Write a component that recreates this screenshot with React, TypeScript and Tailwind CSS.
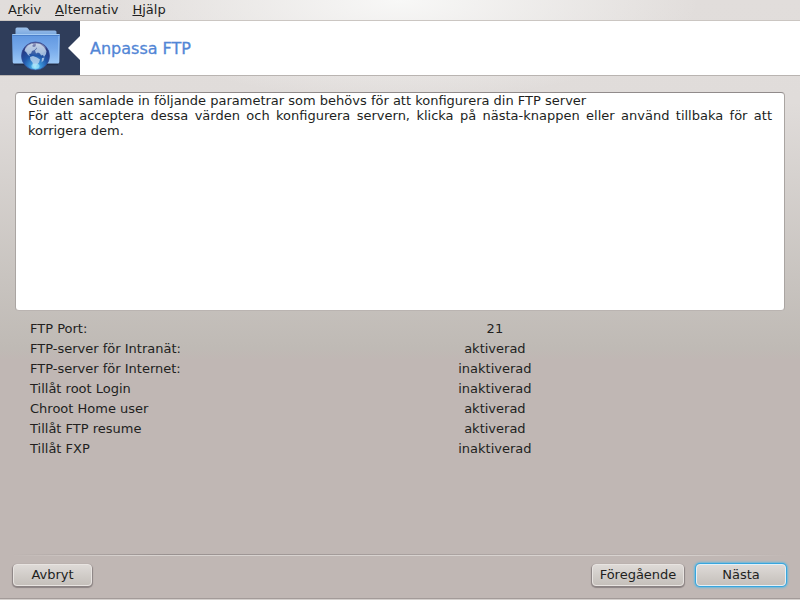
import type { ReactNode } from "react";

interface Setting {
  label: string;
  value: string;
}

const settings: Setting[] = [
  { label: "FTP Port:", value: "21" },
  { label: "FTP-server för Intranät:", value: "aktiverad" },
  { label: "FTP-server för Internet:", value: "inaktiverad" },
  { label: "Tillåt root Login", value: "inaktiverad" },
  { label: "Chroot Home user", value: "aktiverad" },
  { label: "Tillåt FTP resume", value: "aktiverad" },
  { label: "Tillåt FXP", value: "inaktiverad" },
];

const FolderGlobeIcon = () => (
  <svg viewBox="0 0 80 54" className="h-[54px] w-20 shrink-0" aria-hidden="true">
    <defs>
      <linearGradient id="folderBack" x1="0" y1="0" x2="0" y2="1">
        <stop offset="0" stopColor="#9dc0ea" />
        <stop offset="1" stopColor="#79a8e0" />
      </linearGradient>
      <linearGradient id="folderFront" x1="0" y1="0" x2="0" y2="1">
        <stop offset="0" stopColor="#5f96e0" />
        <stop offset="0.5" stopColor="#76a9ea" />
        <stop offset="1" stopColor="#9cc8f6" />
      </linearGradient>
      <radialGradient id="globe" cx="0.5" cy="0.92" r="0.9">
        <stop offset="0" stopColor="#7fdcfa" />
        <stop offset="0.22" stopColor="#3a94da" />
        <stop offset="0.5" stopColor="#2156a8" />
        <stop offset="0.85" stopColor="#26367f" />
        <stop offset="1" stopColor="#5a6199" />
      </radialGradient>
      <linearGradient id="gloss" x1="0" y1="0" x2="0" y2="1">
        <stop offset="0" stopColor="#ffffff" stopOpacity="0.4" />
        <stop offset="1" stopColor="#ffffff" stopOpacity="0.05" />
      </linearGradient>
    </defs>
    <rect width="80" height="54" fill="#2f3d5a" />
    <path d="M80 15 68 27l12 12z" fill="#fff" />
    <path d="M15.500 14V8q0-1.500 1.500-1.500h9q1.500 0 2.300 1.200l1.200 1.800H55q1.500 0 1.500 1.500v3z" fill="url(#folderBack)" />
    <path d="M14 43.500h44" stroke="#18223a" strokeWidth="1.500" opacity="0.6" />
    <path d="M12 14q0-1 1-1h46q1 0 1 1l-.7 27q0 1.500-1.500 1.500H14.200q-1.500 0-1.500-1.500z" fill="url(#folderFront)" />
    <path d="M12.500 13.500h47" stroke="#a5cbf3" />
    <path d="M12.500 14.500h47" stroke="#4b80cb" />
    <path d="M58.800 15 58.300 41" stroke="#a9cff6" opacity="0.6" />
    <circle cx="35.500" cy="35" r="14" fill="url(#globe)" stroke="#344a92" strokeWidth="0.700" />
    <g fill="#bcd5ee" opacity="0.8">
      <path d="M25 28l3-3.500 4-2 1.500 1-1.500 1.500 2 1 1.500-1 1 2-2 2-2.500 1-1 2.500-2 .5 1 2-2-1-2-3-1.500-1z" />
      <path d="M36 22.500l4 .5 4 3 2.500 4-.5 3-2 3-1-2-2 .5-1-2-2-1-2 1-1-3 2-2-1.500-2z" />
      <path d="M30 36l3-1 4 1.500 3 2-1 3-2.500 3-1.500 3-2-3-.5-3-2-2.500z" />
      <path d="M42 37l2.500-.5-1 3-2 2z" />
    </g>
    <ellipse cx="35.500" cy="28" rx="10.500" ry="6" fill="url(#gloss)" />
    <ellipse cx="35.500" cy="45" rx="4" ry="2.500" fill="#a5ecff" opacity="0.6" />
  </svg>
);

const MenuItem: React.FC<{ children: ReactNode }> = ({ children }) => (
  <button type="button" className="leading-5">
    {children}
  </button>
);

const WizardButton: React.FC<{ label: string; className: string }> = ({ label, className }) => (
  <button
    type="button"
    className={`h-[22px] rounded-[4px] border bg-gradient-to-b from-[#dedad7] to-[#c5c0bb] leading-5 ${className}`}
  >
    {label}
  </button>
);

const plain = "border-[#e8e4e1] shadow-[0_1px_1px_1px_#8b8383]";
const focused = "border-[#e4f0f6] shadow-[0_0_0_1px_#38a6de,0_0_2px_2px_#6ab9dd]";

export default function App() {
  return (
    <div className="flex min-h-screen flex-col bg-[radial-gradient(ellipse_300px_100px_at_top,#f8f8f7,transparent),linear-gradient(#e1dddb,#e0dcda_17%,#bfbab5_58%,#c0b7b4_60%)] font-['DejaVu_Sans','Liberation_Sans',sans-serif] text-[13px] text-[#221f1e]">
      <nav className="flex h-[21px] items-start gap-[14px] border-b border-[#cbc6c2] pl-2">
        <MenuItem>A<u>r</u>kiv</MenuItem>
        <MenuItem><u>A</u>lternativ</MenuItem>
        <MenuItem><u>H</u>jälp</MenuItem>
      </nav>

      <header className="flex items-center border-b border-[#b9b4b1] bg-white">
        <FolderGlobeIcon />
        <h1 className="pt-px pl-[10px] text-[16px] leading-6 text-[#5286d6] [-webkit-text-stroke:0.3px_#5286d6]">Anpassa FTP</h1>
      </header>

      <main className="flex grow flex-col px-[15px] pt-4">
        <div className="h-[219px] rounded-[4px] border border-t-[#918b8b] border-r-[#aaa5a2] border-b-[#bab4b1] border-l-[#aaa5a2] bg-white px-3 text-justify leading-[15px]">
          <p>Guiden samlade in följande parametrar som behövs för att konfigurera din FTP server</p>
          <p>
            För att acceptera dessa värden och konfigurera servern, klicka på nästa-knappen eller använd tillbaka för att
            korrigera dem.
          </p>
        </div>

        <table className="mt-2 ml-[15px] w-[69%] table-fixed leading-5">
          <tbody>
            {settings.map((s) => (
              <tr key={s.label}>
                <th scope="row" className="w-3/4 p-0 text-left font-normal">{s.label}</th>
                <td className="p-0 text-center">{s.value}</td>
              </tr>
            ))}
          </tbody>
        </table>
      </main>

      <footer>
        <div className="mx-3">
          <div className="h-px bg-gradient-to-r from-transparent via-[#999190] via-20% to-transparent" />
          <div className="h-px bg-[linear-gradient(to_right,transparent,#d8d3d0_15%,#d8d3d0_85%,transparent)]" />
        </div>
        <div className="flex border-b border-[#a39b99] pt-2 pr-[14px] pb-3 pl-[13px]">
          <WizardButton label="Avbryt" className={`w-[79px] ${plain}`} />
          <WizardButton label="Föregående" className={`ml-auto w-[92px] ${plain}`} />
          <WizardButton label="Nästa" className={`ml-3 w-[90px] ${focused}`} />
        </div>
        <div className="h-px bg-[#d5d0cd]" />
      </footer>
    </div>
  );
}
